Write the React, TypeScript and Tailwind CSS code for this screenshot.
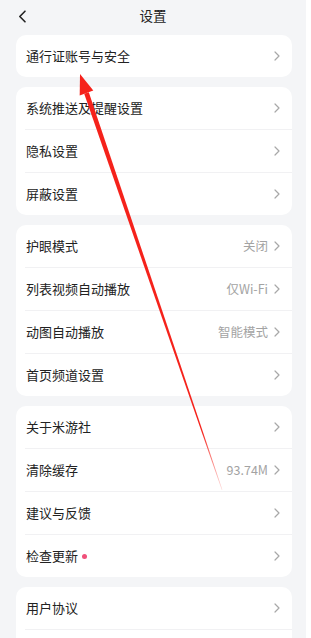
import React from 'react'

type Row = { label: string; value?: string; dot?: boolean }

const sections: Row[][] = [
  [{ label: '通行证账号与安全' }],
  [{ label: '系统推送及提醒设置' }, { label: '隐私设置' }, { label: '屏蔽设置' }],
  [
    { label: '护眼模式', value: '关闭' },
    { label: '列表视频自动播放', value: '仅Wi-Fi' },
    { label: '动图自动播放', value: '智能模式' },
    { label: '首页频道设置' },
  ],
  [
    { label: '关于米游社' },
    { label: '清除缓存', value: '93.74M' },
    { label: '建议与反馈' },
    { label: '检查更新', dot: true },
  ],
  // second row of this card is below the fold
  [{ label: '用户协议' }, { label: '' }],
]

function Chevron() {
  return (
    <svg width="6" height="10" viewBox="0 0 6 10" fill="none">
      <path d="M1 1l4 4-4 4" stroke="#a8a8a8" strokeWidth="1.2" strokeLinecap="round" strokeLinejoin="round" />
    </svg>
  )
}

function Arrow() {
  // annotation arrow drawn over the page
  return (
    <svg className="absolute left-0 top-0 pointer-events-none" width="306" height="638" viewBox="0 0 306 638">
      <defs>
        <linearGradient id="fade" x1="86" y1="93" x2="222" y2="490" gradientUnits="userSpaceOnUse">
          <stop offset="0" stopColor="#f5221b" />
          <stop offset="0.85" stopColor="#f5221b" />
          <stop offset="1" stopColor="#f5221b" stopOpacity="0.15" />
        </linearGradient>
      </defs>
      <polygon points="88.8,92.2 84.2,93.8 221.8,490 222.4,489.8" fill="url(#fade)" />
      <polygon points="80,74 93.3,90.4 79.7,95.4" fill="#f5221b" />
    </svg>
  )
}

export default function App() {
  return (
    <div className="relative w-[306px] h-[638px] overflow-hidden bg-[#f4f5f7]" style={{ fontFamily: '"Noto Sans CJK SC", "Noto Sans", sans-serif' }}>
      <div className="relative h-[35px] flex items-center justify-center">
        <svg className="absolute left-[18px] top-[10px]" width="9" height="13" viewBox="0 0 9 13" fill="none">
          <path d="M7 1.2L1.8 6.5 7 11.8" stroke="#222" strokeWidth="1.6" strokeLinecap="round" strokeLinejoin="round" />
        </svg>
        <span className="text-[13.5px] text-[#222] -mt-[4px]">设置</span>
      </div>

      <div className="flex flex-col gap-[10px]">
        {sections.map((rows, i) => (
          <div key={i} className="ml-[16px] w-[276px] bg-white rounded-[10px] overflow-hidden">
            {rows.map((r, j) => (
              <div key={j}>
                {j > 0 && <div className="ml-[9px] h-px bg-[#f1f1f3]" />}
                {r.label && (
                  <div className="h-[42px] flex items-center pl-[10px] pr-[12px]">
                    <span className="text-[13px] text-[#222]">{r.label}</span>
                    {r.dot && <span className="ml-[4px] w-[5px] h-[5px] rounded-full bg-[#f0507a]" />}
                    <div className="ml-auto flex items-center gap-[6px]">
                      {r.value && <span className="text-[12.5px] text-[#a3a3a3]">{r.value}</span>}
                      <Chevron />
                    </div>
                  </div>
                )}
                {!r.label && <div className="h-[42px]" />}
              </div>
            ))}
          </div>
        ))}
      </div>

      <Arrow />
    </div>
  )
}
